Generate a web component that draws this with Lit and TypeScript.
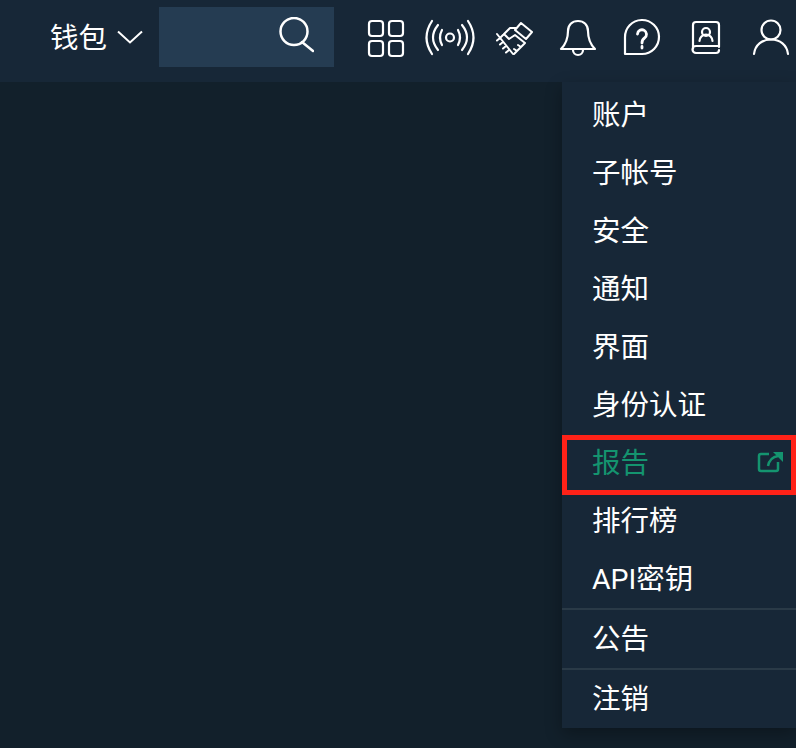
import { LitElement, css, html, svg } from 'lit';
import { customElement } from 'lit/decorators.js';

const menuGroups = [
  ['账户', '子帐号', '安全', '通知', '界面', '身份认证', '报告', '排行榜', 'API密钥'],
  ['公告'],
  ['注销'],
];

// each icon sits in a 64x48 box, centred on the header row
const headerIcons = [
  svg`<rect x="15" y="8" width="14" height="15" rx="3"/><rect x="35" y="8" width="14" height="15" rx="3"/>
      <rect x="15" y="28" width="14" height="15" rx="3"/><rect x="35" y="28" width="14" height="15" rx="3"/>`,
  svg`<circle cx="32" cy="24.500" r="4"/>
      <path d="M14 8Q3 24.500 14 41M20 12Q10 24.500 20 37M24 17Q20 24.500 24 32M50 8Q61 24.500 50 41M44 12Q54 24.500 44 37M40 17Q44 24.500 40 32"/>`,
  svg`<path stroke-width="2" d="M15 21L31 41M18 25l-3 2.500M21 29l-3 2.500M24 33l-3 2.500M27 37l-3 2.500"/>
      <path stroke-width="2" d="M39 10L50 19L44 26L33 17ZM34 15H28L22 21L27 26L33 22L43 30M22 21L19 24M43 30L39 34L36 32M39 34L35 38L32 36M35 38L32 41"/>`,
  svg`<path d="M15 36C21 30 22 24 22 18C22 12 26 8 32 8C38 8 42 12 42 18C42 24 43 30 49 36Z"/><path d="M27 37a5 5 0 0 0 10 0"/>`,
  svg`<path d="M15 41V24.500A17 17 0 1 1 32 41Z"/><path stroke-width="2.800" d="M27.500 21a4.500 4.500 0 1 1 7 4c-2 1.300-2.500 2.500-2.500 5M32 33.500v1.500"/>`,
  svg`<path d="M45 34V12a3 3 0 0 0-3-3H22a3 3 0 0 0-3 3V36M45 33H22a3.500 3.500 0 0 0 0 7H42a3 3 0 0 0 3-3"/>
      <circle cx="32" cy="19" r="4"/><path d="M25.500 28a6.500 6.500 0 0 1 13 0"/>`,
  svg`<circle cx="33" cy="17" r="9.500"/><path d="M16 41C17 32 24 26.500 33 26.500C42 26.500 49 32 50 41"/>`,
];

@customElement('app-root')
export class AppRoot extends LitElement {
  static styles = css`
    :host {
      display: block;
      position: relative;
      width: 796px;
      height: 748px;
      overflow: hidden;
      background: #12202b;
      color: #fff;
      font-family: "Noto Sans CJK SC", sans-serif;
    }

    .header {
      display: flex;
      align-items: center;
      height: 82px;
      padding: 0 0 8px 50px;
      box-sizing: border-box;
      background: #172737;
    }

    .wallet {
      flex: none;
      width: 57px;
      padding-bottom: 2px;
      font-size: 28.500px;
      line-height: 36px;
    }

    .chevron {
      flex: none;
      width: 26px;
      height: 14px;
      margin: 0 16px 0 10px;
    }

    .search {
      flex: none;
      display: flex;
      align-items: center;
      justify-content: flex-end;
      width: 175px;
      height: 60px;
      margin-right: 20px;
      padding-right: 20px;
      box-sizing: border-box;
      background: #253c52;
    }

    .icon {
      flex: none;
      width: 64px;
      height: 48px;
      fill: none;
      stroke: #fff;
      stroke-width: 2.200;
      stroke-linecap: round;
      stroke-linejoin: round;
    }

    .menu {
      position: absolute;
      top: 82px;
      left: 562px;
      width: 234px;
      padding-top: 4px;
      background: #172737;
      box-shadow: 0 6px 16px rgba(0, 0, 0, 0.3);
    }

    .group + .group {
      border-top: 2px solid #2a3a47;
    }

    .item {
      display: flex;
      align-items: center;
      justify-content: space-between;
      height: 58px;
      padding: 0 13px 6px 30px;
      box-sizing: border-box;
      font-size: 28.500px;
    }

    .item.active {
      color: #14946f;
    }

    .latin {
      font-family: Roboto, "Noto Sans CJK SC", sans-serif;
    }

    .external {
      width: 26px;
      height: 26px;
      fill: none;
      stroke: #14946f;
      stroke-width: 2.500;
    }

    .highlight {
      position: absolute;
      top: 435px;
      left: 562px;
      width: 234px;
      height: 60px;
      box-sizing: border-box;
      border: 5px solid #ff2218;
      pointer-events: none;
    }
  `;

  render() {
    return html`
      <div class="header">
        <span class="wallet">钱包</span>
        <svg class="chevron" viewBox="0 0 26 14" fill="none" stroke="#fff" stroke-width="2">
          <path d="M1 1.500L13 12.500L25 1.500" />
        </svg>
        <div class="search">
          <svg width="36" height="40" viewBox="0 0 36 40" fill="none" stroke="#fff" stroke-width="2.500" stroke-linecap="round">
            <circle cx="16" cy="14.500" r="13.500" />
            <path d="M24 25L35 34" />
          </svg>
        </div>
        ${headerIcons.map((icon) => html`<svg class="icon" viewBox="0 0 64 48">${icon}</svg>`)}
      </div>
      <div class="menu">
        ${menuGroups.map((group) => html`
          <div class="group">
            ${group.map((label) => this._renderItem(label))}
          </div>
        `)}
      </div>
      <div class="highlight"></div>
    `;
  }

  _renderItem(label: string) {
    const active = label === '报告';
    return html`
      <div class="item ${active ? 'active' : ''}">
        <span class="latin">${label}</span>
        ${active ? html`
          <svg class="external" viewBox="0 0 26 26">
            <path d="M21 15V22a2 2 0 0 1-2 2H4a2 2 0 0 1-2-2V9a2 2 0 0 1 2-2H12" />
            <path d="M11 19C12 14 15 10 21 9" />
            <path d="M16 5H26V15Z" fill="#14946f" stroke="none" />
          </svg>
        ` : ''}
      </div>
    `;
  }
}
